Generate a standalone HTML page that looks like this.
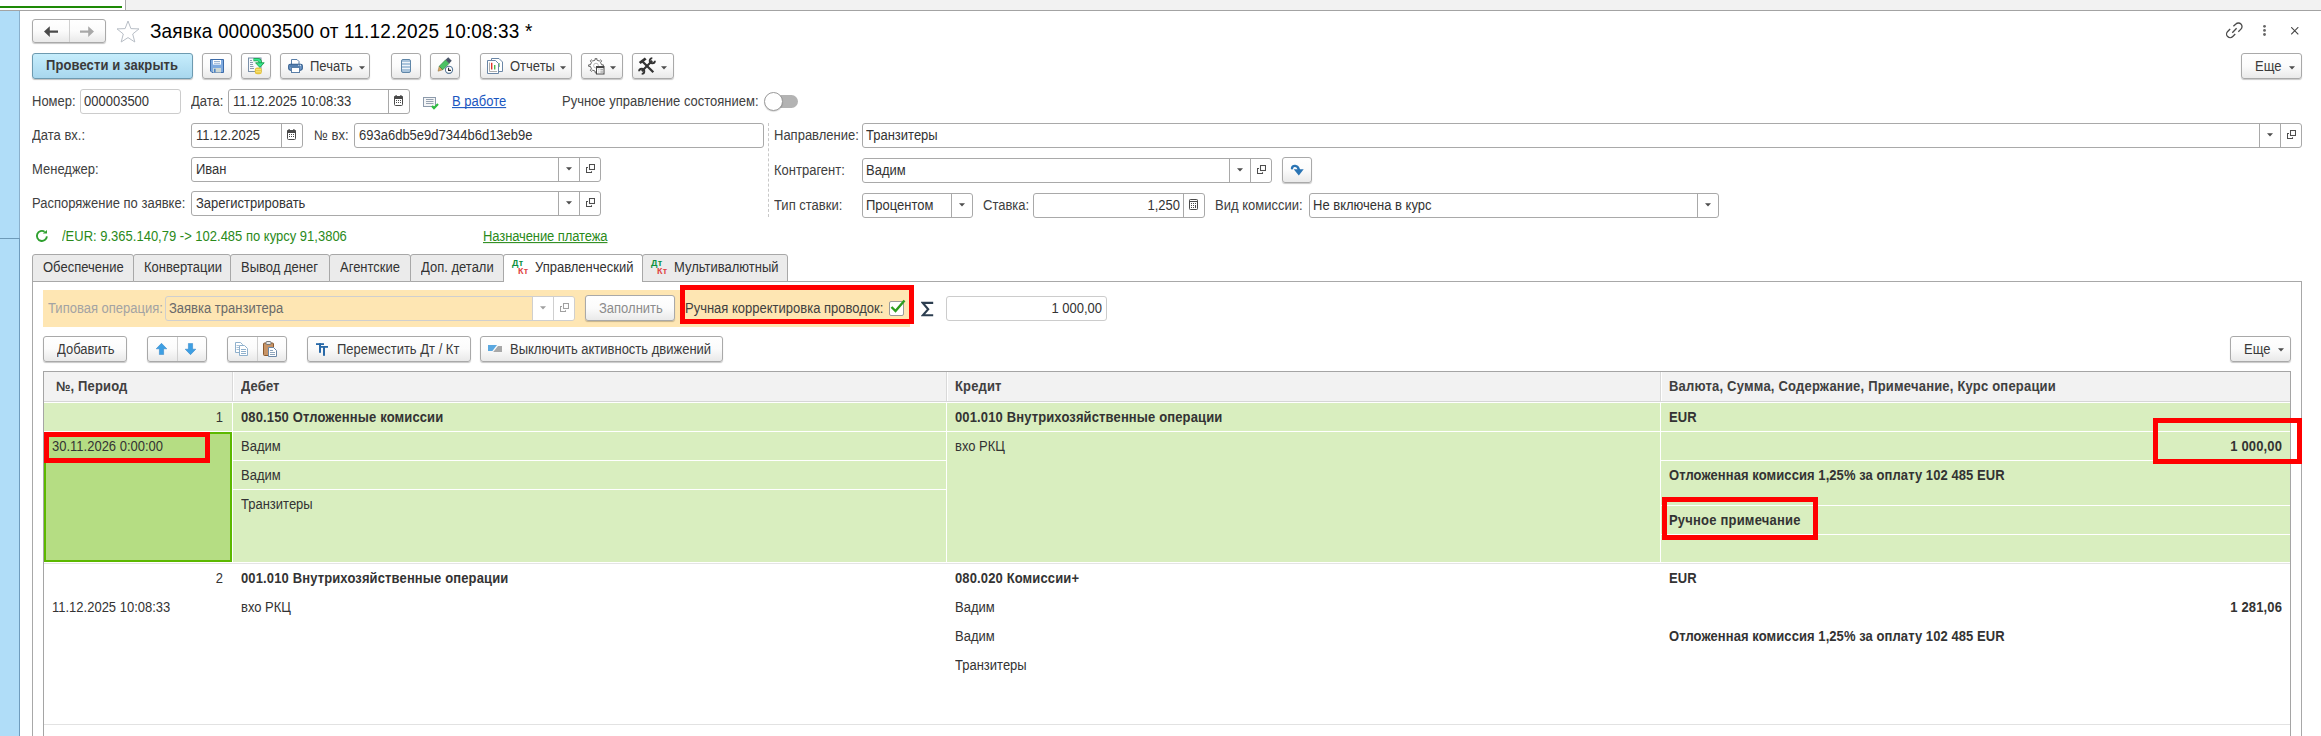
<!DOCTYPE html><html><head><meta charset="utf-8"><style>
html,body{margin:0;padding:0;width:2321px;height:736px;overflow:hidden;background:#fff;position:relative}
body{font-family:"Liberation Sans",sans-serif;font-size:13px}
.t{position:absolute;white-space:nowrap;font-family:"Liberation Sans",sans-serif}
.s{transform:scaleY(1.06);transform-origin:0 12px}
.a{position:absolute;box-sizing:content-box}
.btn{position:absolute;box-sizing:border-box;border:1px solid #a9a9a9;border-radius:3px;background:linear-gradient(#ffffff 0%,#fbfbfb 50%,#e9e9e9 100%);box-shadow:0 1px 1px rgba(0,0,0,0.22)}
.fld{position:absolute;box-sizing:border-box;border:1px solid #a9a9a9;border-radius:3px}
</style></head><body>
<div class="a" style="left:0px;top:0px;width:125px;height:10px;background:#ffffff"></div>
<div class="a" style="left:126px;top:0px;width:2195px;height:10px;background:#f2f2f2"></div>
<div class="a" style="left:0px;top:6px;width:122px;height:2px;background:#1e8a06"></div>
<div class="a" style="left:125px;top:0px;width:1px;height:10px;background:#a8a8a8"></div>
<div class="a" style="left:0px;top:10px;width:2321px;height:1px;background:#a3a3a3"></div>
<div class="a" style="left:0px;top:11px;width:19px;height:725px;background:#b0ddf8"></div>
<div class="a" style="left:19px;top:11px;width:1px;height:227px;background:#8ab0cc"></div>
<div class="a" style="left:19px;top:238px;width:1px;height:498px;background:#6f9cbd"></div>
<div class="a" style="left:0px;top:238px;width:20px;height:1px;background:#6e9ab8"></div>
<div class="btn" style="left:32px;top:19px;width:74px;height:24px;"></div>
<div class="a" style="left:69px;top:20px;width:1px;height:22px;background:#d0d0d0"></div>
<svg class="a" style="left:44px;top:26px" width="15" height="12" viewBox="0 0 15 12"><path d="M0 5.6L5.8 0.2V4.4H14V6.8H5.8V11Z" fill="#4a4a4a"/></svg>
<svg class="a" style="left:80px;top:26px" width="15" height="12" viewBox="0 0 15 12"><path d="M14 5.6L8.2 0.2V4.4H0V6.8H8.2V11Z" fill="#a8a8a8"/></svg>
<svg class="a" style="left:116px;top:20px" width="24" height="23" viewBox="0 0 24 23"><path d="M12 1L14.9 8.6L23 8.9L16.7 14L18.8 22L12 17.6L5.2 22L7.3 14L1 8.9L9.1 8.6Z" fill="none" stroke="#b8bec6" stroke-width="1"/></svg>
<div class="t" style="left:150px;top:21px;line-height:22px;font-size:19px;color:#000;letter-spacing:0.13px;transform:scaleY(1.07);transform-origin:0 18px">Заявка 000003500 от 11.12.2025 10:08:33 *</div>
<svg class="a" style="left:2224px;top:20px" width="20" height="20" viewBox="0 0 20 20"><g fill="none" stroke="#4a4a4a" stroke-width="1.3"><path d="M9.4 6.3L11.85 4.05A3.6 3.6 0 0 1 16.95 9.15L14.3 11.7"/><path d="M6.15 8.95L3.65 11.45A3.6 3.6 0 0 0 8.75 16.55L11.25 14.05"/><path d="M8.3 12.8L12.6 8.2"/></g></svg>
<svg class="a" style="left:2262px;top:24px" width="5" height="13" viewBox="0 0 5 13"><circle cx="2.5" cy="2.3" r="1.4" fill="#666"/><circle cx="2.5" cy="6.4" r="1.4" fill="#666"/><circle cx="2.5" cy="10.5" r="1.4" fill="#666"/></svg>
<svg class="a" style="left:2291px;top:27px" width="8" height="8" viewBox="0 0 8 8"><path d="M0.2 0.2L7.3 7.3M7.3 0.2L0.2 7.3" stroke="#444" stroke-width="1.1"/></svg>
<div class="a" style="left:32px;top:53px;width:159px;height:24px;border:1px solid #6d9ab0;border-radius:3px;background:linear-gradient(#c6edfc,#a8d7ee);box-shadow:0 1px 1px rgba(0,0,0,0.25)"></div>
<div class="t s" style="left:46px;top:58px;line-height:15px;font-size:13px;font-weight:bold;color:#3a3a3a;letter-spacing:0.1px">Провести и закрыть</div>
<div class="btn" style="left:202px;top:53px;width:30px;height:26px;"></div>
<div class="btn" style="left:241px;top:53px;width:30px;height:26px;"></div>
<div class="btn" style="left:280px;top:53px;width:90px;height:26px;"></div>
<div class="btn" style="left:391px;top:53px;width:30px;height:26px;"></div>
<div class="btn" style="left:430px;top:53px;width:30px;height:26px;"></div>
<div class="btn" style="left:480px;top:53px;width:92px;height:26px;"></div>
<div class="btn" style="left:581px;top:53px;width:42px;height:26px;"></div>
<div class="btn" style="left:632px;top:53px;width:42px;height:26px;"></div>
<svg class="a" style="left:210px;top:59px" width="14" height="14" viewBox="0 0 14 14"><path d="M0.5 0.5H13.5V13.5H2L0.5 12Z" fill="#7eaadf" stroke="#3c6ba8"/><rect x="3" y="1" width="8" height="4.6" fill="#fff"/><path d="M4 2.5H10M4 4.3H10" stroke="#7ea0c8" stroke-width="0.8"/><rect x="3" y="9" width="8" height="4.5" fill="#cfd8d4"/><rect x="4" y="9.8" width="1.6" height="3.7" fill="#4f84c4"/></svg>
<svg class="a" style="left:248px;top:57px" width="17" height="18" viewBox="0 0 17 18"><rect x="0.5" y="1" width="12.5" height="13.5" fill="#f6f8fb" stroke="#7a8fa8"/><g stroke="#8a9ab0"><path d="M2 3.5H4M2 5.5H5M2 7.5H5M2 9.5H5.5M2 11.5H6"/></g><rect x="6.8" y="10.6" width="7" height="6.6" rx="2.5" fill="#e6c43c"/><path d="M8 12.7H13M8 14.8H13" stroke="#f7ea8a" stroke-width="1"/><path d="M5.5 2.6H9.6Q12.4 2.6 12.4 6" fill="none" stroke="#1a9a48" stroke-width="3.2"/><path d="M5.8 2.6H9.6Q12.4 2.6 12.4 6" fill="none" stroke="#34e890" stroke-width="1.6"/><path d="M7.6 5.8H16.2L11.9 10.4Z" fill="#34e890" stroke="#1a9a48" stroke-width="0.9" stroke-linejoin="round"/></svg>
<svg class="a" style="left:288px;top:59px" width="15" height="14" viewBox="0 0 15 14"><path d="M3.5 0.5H9L11 2.5V6H3.5Z" fill="#fff" stroke="#5a7fa8"/><rect x="0.7" y="5.2" width="13.6" height="6" rx="1.6" fill="#6f98c8" stroke="#2f5a8a" stroke-width="1.1"/><path d="M2 7H12" stroke="#2f5a8a" stroke-width="0.8"/><rect x="3.5" y="8.5" width="8" height="5" fill="#fff" stroke="#5a7fa8"/><rect x="10.3" y="5.8" width="1" height="0.9" fill="#fff"/><rect x="12" y="5.8" width="1" height="0.9" fill="#fff"/></svg>
<div class="t s" style="left:310px;top:59px;line-height:15px;font-size:13px;color:#3a3a3a;">Печать</div>
<svg class="a" style="left:359px;top:66px" width="6" height="4" viewBox="0 0 6 4"><path d="M0 0.2H6L3 3.6Z" fill="#4d4d4d"/></svg>
<svg class="a" style="left:401px;top:59px" width="10" height="14" viewBox="0 0 10 14"><rect x="0.5" y="0.5" width="9" height="13" rx="1.5" fill="#a9c4dc" stroke="#5f86a8"/><g stroke="#eef4fa" stroke-width="1"><path d="M1 3.5H9M1 6.5H9M1 9.5H9"/></g></svg>
<svg class="a" style="left:437px;top:57px" width="17" height="18" viewBox="0 0 17 18"><path d="M1 14.2L2.23 9.23L5.77 12.77Z" fill="#d9a860" stroke="#8a6a3a" stroke-width="0.5"/><path d="M2.23 9.23L8.59 2.87L12.13 6.41L5.77 12.77Z" fill="#4cc264" stroke="#2d7a3a" stroke-width="0.6"/><path d="M8.59 2.87L11.23 0.23L14.77 3.77L12.13 6.41Z" fill="#4a5568"/><circle cx="12" cy="12.8" r="3.6" fill="#fff" stroke="#5a7a9a" stroke-width="1.1"/><path d="M11.6 10.8V13.4H14" fill="none" stroke="#222" stroke-width="1.1"/></svg>
<svg class="a" style="left:487px;top:58px" width="17" height="17" viewBox="0 0 17 17"><path d="M4.5 0.5H12L15.5 4V13.5H4.5Z" fill="#fff" stroke="#6a86a6"/><rect x="11.3" y="5" width="1.3" height="4" fill="#4cbb4c"/><path d="M0.5 2.5H8.5L11.5 5.5V15.5H0.5Z" fill="#fff" stroke="#6a86a6"/><path d="M2.5 4.5V13.5H10" fill="none" stroke="#999" stroke-width="0.8"/><rect x="4" y="4.8" width="1.4" height="6.7" fill="#e2352b"/><rect x="7" y="7" width="1.4" height="4.5" fill="#4cbb4c"/></svg>
<div class="t s" style="left:510px;top:59px;line-height:15px;font-size:13px;color:#3a3a3a;">Отчеты</div>
<svg class="a" style="left:560px;top:66px" width="6" height="4" viewBox="0 0 6 4"><path d="M0 0.2H6L3 3.6Z" fill="#4d4d4d"/></svg>
<svg class="a" style="left:588px;top:58px" width="17" height="17" viewBox="0 0 17 17"><path d="M13.53 6.72 L15.36 6.85 L15.36 8.35 L13.53 8.48 L12.53 10.89 L13.74 12.27 L12.67 13.34 L11.29 12.13 L8.88 13.13 L8.75 14.96 L7.25 14.96 L7.12 13.13 L4.71 12.13 L3.33 13.34 L2.26 12.27 L3.47 10.89 L2.47 8.48 L0.64 8.35 L0.64 6.85 L2.47 6.72 L3.47 4.31 L2.26 2.93 L3.33 1.86 L4.71 3.07 L7.12 2.07 L7.25 0.24 L8.75 0.24 L8.88 2.07 L11.29 3.07 L12.67 1.86 L13.74 2.93 L12.53 4.31Z" fill="#fff" stroke="#555" stroke-width="0.9" stroke-linejoin="round"/><circle cx="8" cy="7.6" r="2.4" fill="none" stroke="#aaa" stroke-width="0.8"/><rect x="8.5" y="8.5" width="7.5" height="7.5" fill="#fff" stroke="#444" stroke-width="1"/><rect x="8.5" y="8.5" width="7.5" height="1.6" fill="#444"/><path d="M10.5 11.8H11.3M12.3 11.8H15M10.5 14H11.3M12.3 14H15" stroke="#666" stroke-width="0.8"/></svg>
<svg class="a" style="left:610px;top:66px" width="6" height="4" viewBox="0 0 6 4"><path d="M0 0.2H6L3 3.6Z" fill="#4d4d4d"/></svg>
<svg class="a" style="left:638px;top:57px" width="18" height="18" viewBox="0 0 18 18"><path d="M4.5 4.5L15.3 15.3" stroke="#333" stroke-width="2.3"/><path d="M0.8 5L6.8 0.6L8.6 2.4L2.6 7Z" fill="#333"/><path d="M3.8 14.2L14.2 3.8" stroke="#333" stroke-width="2.1"/><path d="M16.9 3.7A2.6 2.6 0 1 1 14.3 1.1" fill="none" stroke="#333" stroke-width="1.9"/><path d="M1.1 14.3A2.6 2.6 0 1 1 3.7 16.9" fill="none" stroke="#333" stroke-width="1.9"/></svg>
<svg class="a" style="left:661px;top:66px" width="6" height="4" viewBox="0 0 6 4"><path d="M0 0.2H6L3 3.6Z" fill="#4d4d4d"/></svg>
<div class="btn" style="left:2241px;top:53px;width:61px;height:26px;"></div>
<div class="t s" style="left:2255px;top:59px;line-height:15px;font-size:13px;color:#3a3a3a;">Еще</div>
<svg class="a" style="left:2289px;top:66px" width="6" height="4" viewBox="0 0 6 4"><path d="M0 0.2H6L3 3.6Z" fill="#4d4d4d"/></svg>
<div class="t s" style="left:32px;top:94px;line-height:15px;font-size:13px;color:#404040;">Номер:</div>
<div class="fld" style="left:80px;top:89px;width:101px;height:25px;border-color:#cccccc;background:#fff"></div>
<div class="t s" style="left:84px;top:94px;line-height:15px;font-size:13px;color:#333333;">000003500</div>
<div class="t s" style="left:191px;top:94px;line-height:15px;font-size:13px;color:#404040;">Дата:</div>
<div class="fld" style="left:228px;top:89px;width:182px;height:25px;border-color:#a9a9a9;background:#fff"></div>
<div class="a" style="left:388px;top:90px;width:1px;height:23px;background:#a9a9a9"></div>
<svg class="a" style="left:394px;top:95px" width="9" height="11" viewBox="0 0 9 11"><rect x="0.5" y="1.5" width="8" height="9" rx="1" fill="#fff" stroke="#4a4a4a"/><rect x="0" y="1" width="9" height="3" rx="1" fill="#4a4a4a"/><rect x="1.5" y="0" width="1.2" height="2.2" fill="#4a4a4a"/><rect x="6.3" y="0" width="1.2" height="2.2" fill="#4a4a4a"/><g fill="#4a4a4a"><rect x="2" y="5" width="1" height="1"/><rect x="4" y="5" width="1" height="1"/><rect x="6" y="5" width="1" height="1"/><rect x="2" y="7" width="1" height="1"/><rect x="4" y="7" width="1" height="1"/><rect x="6" y="7" width="1" height="1"/></g></svg>
<div class="t s" style="left:233px;top:94px;line-height:15px;font-size:13px;color:#333333;">11.12.2025 10:08:33</div>
<svg class="a" style="left:423px;top:97px" width="16" height="13" viewBox="0 0 16 13"><rect x="0.5" y="0.5" width="12" height="9" fill="#f4f5f7" stroke="#8c9aab"/><path d="M3 2.5H10.5M3 4.5H10.5M3 6.5H10.5" stroke="#97a3b1" stroke-width="1"/><path d="M9 9L11 11.2L15 7" fill="none" stroke="#2ebd3f" stroke-width="2.1"/></svg>
<div class="t s" style="left:452px;top:94px;line-height:15px;font-size:13px;color:#1a56c0;text-decoration:underline;text-decoration-skip-ink:none">В работе</div>
<div class="t s" style="left:562px;top:94px;line-height:15px;font-size:13px;color:#404040;">Ручное управление состоянием:</div>
<div class="a" style="left:772px;top:95px;width:26px;height:13px;background:#b3b3b3;border-radius:7px"></div>
<div class="a" style="left:764px;top:92px;width:17px;height:17px;border-radius:50%;background:#fff;border:1px solid #9a9a9a;box-shadow:0 1px 1px rgba(0,0,0,.15)"></div>
<div class="t s" style="left:32px;top:128px;line-height:15px;font-size:13px;color:#404040;">Дата вх.:</div>
<div class="fld" style="left:191px;top:123px;width:112px;height:25px;border-color:#a9a9a9;background:#fff"></div>
<div class="a" style="left:281px;top:124px;width:1px;height:23px;background:#a9a9a9"></div>
<svg class="a" style="left:287px;top:129px" width="9" height="11" viewBox="0 0 9 11"><rect x="0.5" y="1.5" width="8" height="9" rx="1" fill="#fff" stroke="#4a4a4a"/><rect x="0" y="1" width="9" height="3" rx="1" fill="#4a4a4a"/><rect x="1.5" y="0" width="1.2" height="2.2" fill="#4a4a4a"/><rect x="6.3" y="0" width="1.2" height="2.2" fill="#4a4a4a"/><g fill="#4a4a4a"><rect x="2" y="5" width="1" height="1"/><rect x="4" y="5" width="1" height="1"/><rect x="6" y="5" width="1" height="1"/><rect x="2" y="7" width="1" height="1"/><rect x="4" y="7" width="1" height="1"/><rect x="6" y="7" width="1" height="1"/></g></svg>
<div class="t s" style="left:196px;top:128px;line-height:15px;font-size:13px;color:#333333;">11.12.2025</div>
<div class="t s" style="left:314px;top:128px;line-height:15px;font-size:13px;color:#404040;">№ вх:</div>
<div class="fld" style="left:354px;top:123px;width:410px;height:25px;border-color:#a9a9a9;background:#fff"></div>
<div class="t s" style="left:359px;top:128px;line-height:15px;font-size:13px;color:#333333;">693a6db5e9d7344b6d13eb9e</div>
<div class="a" style="left:768px;top:123px;width:0;height:94px;border-left:1px dashed #c8c8c8"></div>
<div class="t s" style="left:774px;top:128px;line-height:15px;font-size:13px;color:#404040;">Направление:</div>
<div class="fld" style="left:862px;top:123px;width:1440px;height:25px;border-color:#a9a9a9;background:#fff"></div>
<div class="a" style="left:2259px;top:124px;width:1px;height:23px;background:#a9a9a9"></div>
<div class="a" style="left:2280px;top:124px;width:1px;height:23px;background:#a9a9a9"></div>
<svg class="a" style="left:2267px;top:133px" width="6" height="4" viewBox="0 0 6 4"><path d="M0 0.2H6L3 3.6Z" fill="#4d4d4d"/></svg>
<svg class="a" style="left:2287px;top:130px" width="9" height="9" viewBox="0 0 9 9"><path d="M2 3.5H0.5V8.5H5.5V7.3" fill="none" stroke="#4d4d4d" stroke-width="1.05"/><rect x="3.5" y="0.5" width="5" height="5" fill="none" stroke="#4d4d4d" stroke-width="1.05"/></svg>
<div class="t s" style="left:866px;top:128px;line-height:15px;font-size:13px;color:#333333;">Транзитеры</div>
<div class="t s" style="left:32px;top:162px;line-height:15px;font-size:13px;color:#404040;">Менеджер:</div>
<div class="fld" style="left:191px;top:157px;width:410px;height:25px;border-color:#a9a9a9;background:#fff"></div>
<div class="a" style="left:558px;top:158px;width:1px;height:23px;background:#a9a9a9"></div>
<div class="a" style="left:579px;top:158px;width:1px;height:23px;background:#a9a9a9"></div>
<svg class="a" style="left:566px;top:167px" width="6" height="4" viewBox="0 0 6 4"><path d="M0 0.2H6L3 3.6Z" fill="#4d4d4d"/></svg>
<svg class="a" style="left:586px;top:164px" width="9" height="9" viewBox="0 0 9 9"><path d="M2 3.5H0.5V8.5H5.5V7.3" fill="none" stroke="#4d4d4d" stroke-width="1.05"/><rect x="3.5" y="0.5" width="5" height="5" fill="none" stroke="#4d4d4d" stroke-width="1.05"/></svg>
<div class="t s" style="left:196px;top:162px;line-height:15px;font-size:13px;color:#333333;">Иван</div>
<div class="t s" style="left:774px;top:163px;line-height:15px;font-size:13px;color:#404040;">Контрагент:</div>
<div class="fld" style="left:862px;top:158px;width:410px;height:25px;border-color:#a9a9a9;background:#fff"></div>
<div class="a" style="left:1229px;top:159px;width:1px;height:23px;background:#a9a9a9"></div>
<div class="a" style="left:1250px;top:159px;width:1px;height:23px;background:#a9a9a9"></div>
<svg class="a" style="left:1237px;top:168px" width="6" height="4" viewBox="0 0 6 4"><path d="M0 0.2H6L3 3.6Z" fill="#4d4d4d"/></svg>
<svg class="a" style="left:1257px;top:165px" width="9" height="9" viewBox="0 0 9 9"><path d="M2 3.5H0.5V8.5H5.5V7.3" fill="none" stroke="#4d4d4d" stroke-width="1.05"/><rect x="3.5" y="0.5" width="5" height="5" fill="none" stroke="#4d4d4d" stroke-width="1.05"/></svg>
<div class="t s" style="left:866px;top:163px;line-height:15px;font-size:13px;color:#333333;">Вадим</div>
<div class="btn" style="left:1282px;top:157px;width:30px;height:26px;"></div>
<svg class="a" style="left:1290px;top:164px" width="15" height="13" viewBox="0 0 15 13"><path d="M2 4.2C2.6 1.2 7.6 0.4 8.9 5.8" fill="none" stroke="#2a74b4" stroke-width="2.4" stroke-linecap="round"/><path d="M3.7 5.3H13.7L8.8 11.4Z" fill="#2a74b4"/></svg>
<div class="t s" style="left:32px;top:196px;line-height:15px;font-size:13px;color:#404040;">Распоряжение по заявке:</div>
<div class="fld" style="left:191px;top:191px;width:410px;height:25px;border-color:#a9a9a9;background:#fff"></div>
<div class="a" style="left:558px;top:192px;width:1px;height:23px;background:#a9a9a9"></div>
<div class="a" style="left:579px;top:192px;width:1px;height:23px;background:#a9a9a9"></div>
<svg class="a" style="left:566px;top:201px" width="6" height="4" viewBox="0 0 6 4"><path d="M0 0.2H6L3 3.6Z" fill="#4d4d4d"/></svg>
<svg class="a" style="left:586px;top:198px" width="9" height="9" viewBox="0 0 9 9"><path d="M2 3.5H0.5V8.5H5.5V7.3" fill="none" stroke="#4d4d4d" stroke-width="1.05"/><rect x="3.5" y="0.5" width="5" height="5" fill="none" stroke="#4d4d4d" stroke-width="1.05"/></svg>
<div class="t s" style="left:196px;top:196px;line-height:15px;font-size:13px;color:#333333;">Зарегистрировать</div>
<div class="t s" style="left:774px;top:198px;line-height:15px;font-size:13px;color:#404040;">Тип ставки:</div>
<div class="fld" style="left:862px;top:193px;width:111px;height:25px;border-color:#a9a9a9;background:#fff"></div>
<div class="a" style="left:951px;top:194px;width:1px;height:23px;background:#a9a9a9"></div>
<svg class="a" style="left:959px;top:203px" width="6" height="4" viewBox="0 0 6 4"><path d="M0 0.2H6L3 3.6Z" fill="#4d4d4d"/></svg>
<div class="t s" style="left:866px;top:198px;line-height:15px;font-size:13px;color:#333333;">Процентом</div>
<div class="t s" style="left:983px;top:198px;line-height:15px;font-size:13px;color:#404040;">Ставка:</div>
<div class="fld" style="left:1033px;top:193px;width:172px;height:25px;border-color:#a9a9a9;background:#fff"></div>
<div class="a" style="left:1183px;top:194px;width:1px;height:23px;background:#a9a9a9"></div>
<svg class="a" style="left:1189px;top:199px" width="9" height="11" viewBox="0 0 9 11"><rect x="0.5" y="0.5" width="8" height="10" rx="0.8" fill="#fff" stroke="#4a4a4a"/><path d="M1 2.5H8" stroke="#4a4a4a"/><g fill="#4a4a4a"><rect x="2" y="4" width="1" height="1"/><rect x="4" y="4" width="1" height="1"/><rect x="6" y="4" width="1" height="1"/><rect x="2" y="6" width="1" height="1"/><rect x="4" y="6" width="1" height="1"/><rect x="2" y="8" width="1" height="1"/><rect x="4" y="8" width="1" height="1"/><rect x="6" y="6" width="1" height="3"/></g></svg>
<div class="t s" style="right:1141px;top:198px;line-height:15px;font-size:13px;color:#333333;">1,250</div>
<div class="t s" style="left:1215px;top:198px;line-height:15px;font-size:13px;color:#404040;">Вид комиссии:</div>
<div class="fld" style="left:1309px;top:193px;width:410px;height:25px;border-color:#a9a9a9;background:#fff"></div>
<div class="a" style="left:1697px;top:194px;width:1px;height:23px;background:#a9a9a9"></div>
<svg class="a" style="left:1705px;top:203px" width="6" height="4" viewBox="0 0 6 4"><path d="M0 0.2H6L3 3.6Z" fill="#4d4d4d"/></svg>
<div class="t s" style="left:1313px;top:198px;line-height:15px;font-size:13px;color:#333333;">Не включена в курс</div>
<svg class="a" style="left:35px;top:229px" width="14" height="14" viewBox="0 0 14 14"><path d="M11.9 7.4A5 5 0 1 1 9.6 2.7" fill="none" stroke="#2ea02e" stroke-width="1.9"/><path d="M7.8 4.5L12 0.9V4.5Z" fill="#2ea02e"/></svg>
<div class="t s" style="left:62px;top:229px;line-height:15px;font-size:13px;color:#2a8a1a;">/EUR: 9.365.140,79 -&gt; 102.485 по курсу 91,3806</div>
<div class="t s" style="left:483px;top:229px;line-height:15px;font-size:13px;color:#2a8a1a;text-decoration:underline;text-decoration-skip-ink:none;letter-spacing:-0.1px">Назначение платежа</div>
<div class="a" style="left:32px;top:254px;width:100px;height:26px;background:#ebebeb;border:1px solid #a8a8a8;border-radius:3px 3px 0 0"></div>
<div class="t s" style="left:43px;top:260px;line-height:15px;font-size:13px;color:#333;">Обеспечение</div>
<div class="a" style="left:133px;top:254px;width:96px;height:26px;background:#ebebeb;border:1px solid #a8a8a8;border-radius:3px 3px 0 0"></div>
<div class="t s" style="left:144px;top:260px;line-height:15px;font-size:13px;color:#333;">Конвертации</div>
<div class="a" style="left:230px;top:254px;width:98px;height:26px;background:#ebebeb;border:1px solid #a8a8a8;border-radius:3px 3px 0 0"></div>
<div class="t s" style="left:241px;top:260px;line-height:15px;font-size:13px;color:#333;">Вывод денег</div>
<div class="a" style="left:329px;top:254px;width:80px;height:26px;background:#ebebeb;border:1px solid #a8a8a8;border-radius:3px 3px 0 0"></div>
<div class="t s" style="left:340px;top:260px;line-height:15px;font-size:13px;color:#333;">Агентские</div>
<div class="a" style="left:410px;top:254px;width:92px;height:26px;background:#ebebeb;border:1px solid #a8a8a8;border-radius:3px 3px 0 0"></div>
<div class="t s" style="left:421px;top:260px;line-height:15px;font-size:13px;color:#333;">Доп. детали</div>
<div class="a" style="left:503px;top:254px;width:138px;height:27px;background:#ffffff;border:1px solid #a8a8a8;border-bottom:none;border-radius:3px 3px 0 0"></div>
<div class="t s" style="left:535px;top:260px;line-height:15px;font-size:13px;color:#333;">Управленческий</div>
<div class="t" style="left:512px;top:259px;font-size:9px;line-height:9px;color:#0a9040;font-weight:bold;letter-spacing:0.3px">Дт</div>
<div class="t" style="left:518px;top:267px;font-size:9px;line-height:9px;color:#e04444;font-weight:bold;letter-spacing:0.3px">Кт</div>
<div class="a" style="left:642px;top:254px;width:144px;height:26px;background:#ebebeb;border:1px solid #a8a8a8;border-radius:3px 3px 0 0"></div>
<div class="t s" style="left:674px;top:260px;line-height:15px;font-size:13px;color:#333;">Мультивалютный</div>
<div class="t" style="left:651px;top:259px;font-size:9px;line-height:9px;color:#0a9040;font-weight:bold;letter-spacing:0.3px">Дт</div>
<div class="t" style="left:657px;top:267px;font-size:9px;line-height:9px;color:#e04444;font-weight:bold;letter-spacing:0.3px">Кт</div>
<div class="a" style="left:642px;top:281px;width:1660px;height:1px;background:#a8a8a8"></div>
<div class="a" style="left:32px;top:281px;width:1px;height:455px;background:#a8a8a8"></div>
<div class="a" style="left:2301px;top:281px;width:1px;height:455px;background:#a8a8a8"></div>
<div class="a" style="left:43px;top:290px;width:867px;height:37px;background:#fee6b3"></div>
<div class="t s" style="left:48px;top:301px;line-height:15px;font-size:13px;color:#a3a3a3;">Типовая операция:</div>
<div class="fld" style="left:165px;top:296px;width:410px;height:25px;border-color:#cfcfcf;background:transparent"></div>
<div class="a" style="left:533px;top:297px;width:41px;height:23px;background:#fff;border-radius:0 2px 2px 0"></div>
<div class="a" style="left:532px;top:297px;width:1px;height:23px;background:#cfcfcf"></div>
<div class="a" style="left:553px;top:297px;width:1px;height:23px;background:#cfcfcf"></div>
<svg class="a" style="left:540px;top:306px" width="6" height="4" viewBox="0 0 6 4"><path d="M0 0.2H6L3 3.6Z" fill="#a0a0a0"/></svg>
<svg class="a" style="left:560px;top:303px" width="9" height="9" viewBox="0 0 9 9"><path d="M2 3.5H0.5V8.5H5.5V7.3" fill="none" stroke="#a0a0a0" stroke-width="1.05"/><rect x="3.5" y="0.5" width="5" height="5" fill="none" stroke="#a0a0a0" stroke-width="1.05"/></svg>
<div class="t s" style="left:169px;top:301px;line-height:15px;font-size:13px;color:#6a6a6a;">Заявка транзитера</div>
<div class="btn" style="left:585px;top:295px;width:90px;height:26px;"></div>
<div class="t s" style="left:599px;top:301px;line-height:15px;font-size:13px;color:#8c8c8c;">Заполнить</div>
<div class="t s" style="left:685px;top:301px;line-height:15px;font-size:13px;color:#404040;">Ручная корректировка проводок:</div>
<div class="a" style="left:889px;top:301px;width:13px;height:13px;background:#fff;border:1px solid #9a9a9a;border-radius:2px"></div>
<svg class="a" style="left:890px;top:299px" width="16" height="15" viewBox="0 0 16 15"><path d="M1.5 8L5.5 12L14.5 1.5" fill="none" stroke="#2e9e1e" stroke-width="2.4"/></svg>
<div class="a" style="left:680px;top:285px;width:224px;height:29px;border:5px solid #ff0000"></div>
<svg class="a" style="left:921px;top:301px" width="13" height="16" viewBox="0 0 13 16"><path d="M12.2 1.9H1.8L7.2 8.2L1.8 14.2H12.2" fill="none" stroke="#2c3e50" stroke-width="2.1" stroke-linejoin="miter" stroke-miterlimit="10"/></svg>
<div class="fld" style="left:946px;top:296px;width:161px;height:25px;border-color:#cccccc;background:#fff"></div>
<div class="t s" style="right:1219px;top:301px;line-height:15px;font-size:13px;color:#333333;">1 000,00</div>
<div class="btn" style="left:43px;top:336px;width:84px;height:26px;"></div>
<div class="t s" style="left:57px;top:342px;line-height:15px;font-size:13px;color:#3a3a3a;">Добавить</div>
<div class="btn" style="left:147px;top:336px;width:60px;height:26px;"></div>
<div class="a" style="left:177px;top:337px;width:1px;height:24px;background:#d0d0d0"></div>
<svg class="a" style="left:156px;top:343px" width="11" height="12" viewBox="0 0 11 12"><path d="M5.5 0.3L10.8 5.8H7.6V11.6H3.4V5.8H0.2Z" fill="#3d9fe3" stroke="#2b7fc4" stroke-width="0.5"/></svg>
<svg class="a" style="left:185px;top:343px" width="11" height="12" viewBox="0 0 11 12"><path d="M5.5 11.7L10.8 6.2H7.6V0.4H3.4V6.2H0.2Z" fill="#3d9fe3" stroke="#2b7fc4" stroke-width="0.5"/></svg>
<div class="btn" style="left:227px;top:336px;width:60px;height:26px;"></div>
<div class="a" style="left:257px;top:337px;width:1px;height:24px;background:#d0d0d0"></div>
<svg class="a" style="left:235px;top:342px" width="14" height="14" viewBox="0 0 14 14"><path d="M0.5 0.5H5.5L7.5 2.5V10.5H0.5Z" fill="#fff" stroke="#8fb0cc"/><path d="M1.5 3.5H4M1.5 5.5H4M1.5 7.5H4" stroke="#a9c2d8"/><path d="M4.5 3.5H9.5L12.5 6.5V13.5H4.5Z" fill="#fff" stroke="#8fb0cc"/><path d="M6 7.5H11M6 9.5H11M6 11.5H11" stroke="#8fb0cc"/></svg>
<svg class="a" style="left:263px;top:341px" width="15" height="16" viewBox="0 0 15 16"><rect x="0.5" y="2" width="10" height="12.5" rx="1" fill="#c89466" stroke="#8a5a30"/><rect x="3" y="0.5" width="5" height="3" rx="1" fill="#e8e8e8" stroke="#777"/><path d="M5.5 6.5H10.5L13.5 9.5V15.5H5.5Z" fill="#fff" stroke="#6a86a6"/><path d="M7 9.5H10M7 11.5H12M7 13.5H12" stroke="#8fa6bd"/></svg>
<div class="btn" style="left:307px;top:336px;width:164px;height:26px;"></div>
<svg class="a" style="left:316px;top:343px" width="12" height="13" viewBox="0 0 12 13"><g fill="#2a6aa8"><rect x="0" y="0.2" width="8" height="1.8"/><rect x="3" y="0.2" width="2" height="9.6"/><rect x="4.3" y="3" width="7.7" height="1.8"/><rect x="7" y="3" width="2" height="9.8"/></g></svg>
<div class="t s" style="left:337px;top:342px;line-height:15px;font-size:13px;color:#3a3a3a;">Переместить Дт / Кт</div>
<div class="btn" style="left:480px;top:336px;width:243px;height:26px;"></div>
<svg class="a" style="left:488px;top:345px" width="14" height="7" viewBox="0 0 14 7"><path d="M0 0H9L4.4 6H0Z" fill="#5aa8e0"/><path d="M10 1H14V7H5.2Z" fill="#a8a8a8"/></svg>
<div class="t s" style="left:510px;top:342px;line-height:15px;font-size:13px;color:#3a3a3a;">Выключить активность движений</div>
<div class="btn" style="left:2230px;top:336px;width:61px;height:26px;"></div>
<div class="t s" style="left:2244px;top:342px;line-height:15px;font-size:13px;color:#3a3a3a;">Еще</div>
<svg class="a" style="left:2278px;top:348px" width="6" height="4" viewBox="0 0 6 4"><path d="M0 0.2H6L3 3.6Z" fill="#4d4d4d"/></svg>
<div class="a" style="left:43px;top:371px;width:2246px;height:400px;border:1px solid #a5a5a5"></div>
<div class="a" style="left:44px;top:372px;width:2246px;height:29px;background:#f2f2f2"></div>
<div class="a" style="left:44px;top:401px;width:2246px;height:1px;background:#d6d6d6"></div>
<div class="a" style="left:44px;top:402px;width:2246px;height:1px;background:#ffffff"></div>
<div class="a" style="left:232px;top:372px;width:1px;height:29px;background:#d9d9d9"></div>
<div class="a" style="left:233px;top:372px;width:1px;height:29px;background:#ffffff"></div>
<div class="a" style="left:946px;top:372px;width:1px;height:29px;background:#d9d9d9"></div>
<div class="a" style="left:947px;top:372px;width:1px;height:29px;background:#ffffff"></div>
<div class="a" style="left:1660px;top:372px;width:1px;height:29px;background:#d9d9d9"></div>
<div class="a" style="left:1661px;top:372px;width:1px;height:29px;background:#ffffff"></div>
<div class="t s" style="left:56px;top:379px;line-height:15px;font-size:13px;font-weight:bold;color:#404040;letter-spacing:0.13px;">№, Период</div>
<div class="t s" style="left:241px;top:379px;line-height:15px;font-size:13px;font-weight:bold;color:#404040;letter-spacing:0.13px;">Дебет</div>
<div class="t s" style="left:955px;top:379px;line-height:15px;font-size:13px;font-weight:bold;color:#404040;letter-spacing:0.13px;">Кредит</div>
<div class="t s" style="left:1669px;top:379px;line-height:15px;font-size:13px;font-weight:bold;color:#404040;letter-spacing:0.2px">Валюта, Сумма, Содержание, Примечание, Курс операции</div>
<div class="a" style="left:44px;top:403px;width:2246px;height:159px;background:#d9eebf"></div>
<div class="a" style="left:232px;top:403px;width:1px;height:159px;background:#ffffff"></div>
<div class="a" style="left:946px;top:403px;width:1px;height:159px;background:#ffffff"></div>
<div class="a" style="left:1660px;top:403px;width:1px;height:159px;background:#ffffff"></div>
<div class="a" style="left:44px;top:431px;width:188px;height:1px;background:#ffffff"></div>
<div class="a" style="left:233px;top:431px;width:713px;height:1px;background:#ffffff"></div>
<div class="a" style="left:233px;top:460px;width:713px;height:1px;background:#ffffff"></div>
<div class="a" style="left:233px;top:489px;width:713px;height:1px;background:#ffffff"></div>
<div class="a" style="left:947px;top:431px;width:713px;height:1px;background:#ffffff"></div>
<div class="a" style="left:1661px;top:431px;width:629px;height:1px;background:#ffffff"></div>
<div class="a" style="left:1661px;top:460px;width:629px;height:1px;background:#ffffff"></div>
<div class="a" style="left:1661px;top:505px;width:629px;height:1px;background:#ffffff"></div>
<div class="a" style="left:1661px;top:534px;width:629px;height:1px;background:#ffffff"></div>
<div class="a" style="left:44px;top:432px;width:184px;height:126px;background:#b5dd83;border:2px solid #5cb800"></div>
<div class="a" style="left:44px;top:562px;width:2246px;height:1px;background:#ffffff"></div>
<div class="a" style="left:44px;top:563px;width:2246px;height:1px;background:#e4e4e4"></div>
<div class="t s" style="right:2098px;top:410px;line-height:15px;font-size:13px;color:#333333;">1</div>
<div class="t s" style="left:52px;top:439px;line-height:15px;font-size:13px;color:#333333;">30.11.2026 0:00:00</div>
<div class="t s" style="left:241px;top:410px;line-height:15px;font-size:13px;font-weight:bold;color:#333333;letter-spacing:0.13px;">080.150 Отложенные комиссии</div>
<div class="t s" style="left:241px;top:439px;line-height:15px;font-size:13px;color:#333333;">Вадим</div>
<div class="t s" style="left:241px;top:468px;line-height:15px;font-size:13px;color:#333333;">Вадим</div>
<div class="t s" style="left:241px;top:497px;line-height:15px;font-size:13px;color:#333333;">Транзитеры</div>
<div class="t s" style="left:955px;top:410px;line-height:15px;font-size:13px;font-weight:bold;color:#333333;letter-spacing:0.13px;">001.010 Внутрихозяйственные операции</div>
<div class="t s" style="left:955px;top:439px;line-height:15px;font-size:13px;color:#333333;">вхо РКЦ</div>
<div class="t s" style="left:1669px;top:410px;line-height:15px;font-size:13px;font-weight:bold;color:#333333;letter-spacing:0.13px;">EUR</div>
<div class="t s" style="right:39px;top:439px;line-height:15px;font-size:13px;font-weight:bold;color:#333333;letter-spacing:0.13px;">1 000,00</div>
<div class="t s" style="left:1669px;top:468px;line-height:15px;font-size:13px;font-weight:bold;color:#333333;letter-spacing:0.07px">Отложенная комиссия 1,25% за оплату 102 485 EUR</div>
<div class="t s" style="left:1669px;top:513px;line-height:15px;font-size:13px;font-weight:bold;color:#333333;letter-spacing:0.2px">Ручное примечание</div>
<div class="t s" style="right:2098px;top:571px;line-height:15px;font-size:13px;color:#333333;">2</div>
<div class="t s" style="left:52px;top:600px;line-height:15px;font-size:13px;color:#333333;">11.12.2025 10:08:33</div>
<div class="t s" style="left:241px;top:571px;line-height:15px;font-size:13px;font-weight:bold;color:#333333;letter-spacing:0.13px;">001.010 Внутрихозяйственные операции</div>
<div class="t s" style="left:241px;top:600px;line-height:15px;font-size:13px;color:#333333;">вхо РКЦ</div>
<div class="t s" style="left:955px;top:571px;line-height:15px;font-size:13px;font-weight:bold;color:#333333;letter-spacing:0.13px;">080.020 Комиссии+</div>
<div class="t s" style="left:955px;top:600px;line-height:15px;font-size:13px;color:#333333;">Вадим</div>
<div class="t s" style="left:955px;top:629px;line-height:15px;font-size:13px;color:#333333;">Вадим</div>
<div class="t s" style="left:955px;top:658px;line-height:15px;font-size:13px;color:#333333;">Транзитеры</div>
<div class="t s" style="left:1669px;top:571px;line-height:15px;font-size:13px;font-weight:bold;color:#333333;letter-spacing:0.13px;">EUR</div>
<div class="t s" style="right:39px;top:600px;line-height:15px;font-size:13px;font-weight:bold;color:#333333;letter-spacing:0.13px;">1 281,06</div>
<div class="t s" style="left:1669px;top:629px;line-height:15px;font-size:13px;font-weight:bold;color:#333333;letter-spacing:0.07px">Отложенная комиссия 1,25% за оплату 102 485 EUR</div>
<div class="a" style="left:44px;top:724px;width:2246px;height:1px;background:#e2e2e2"></div>
<div class="a" style="left:44px;top:432px;width:156px;height:21px;border:5px solid #ff0000"></div>
<div class="a" style="left:2153px;top:418px;width:139px;height:36px;border:5px solid #ff0000"></div>
<div class="a" style="left:1662px;top:497px;width:146px;height:33px;border:5px solid #ff0000"></div>
</body></html>
